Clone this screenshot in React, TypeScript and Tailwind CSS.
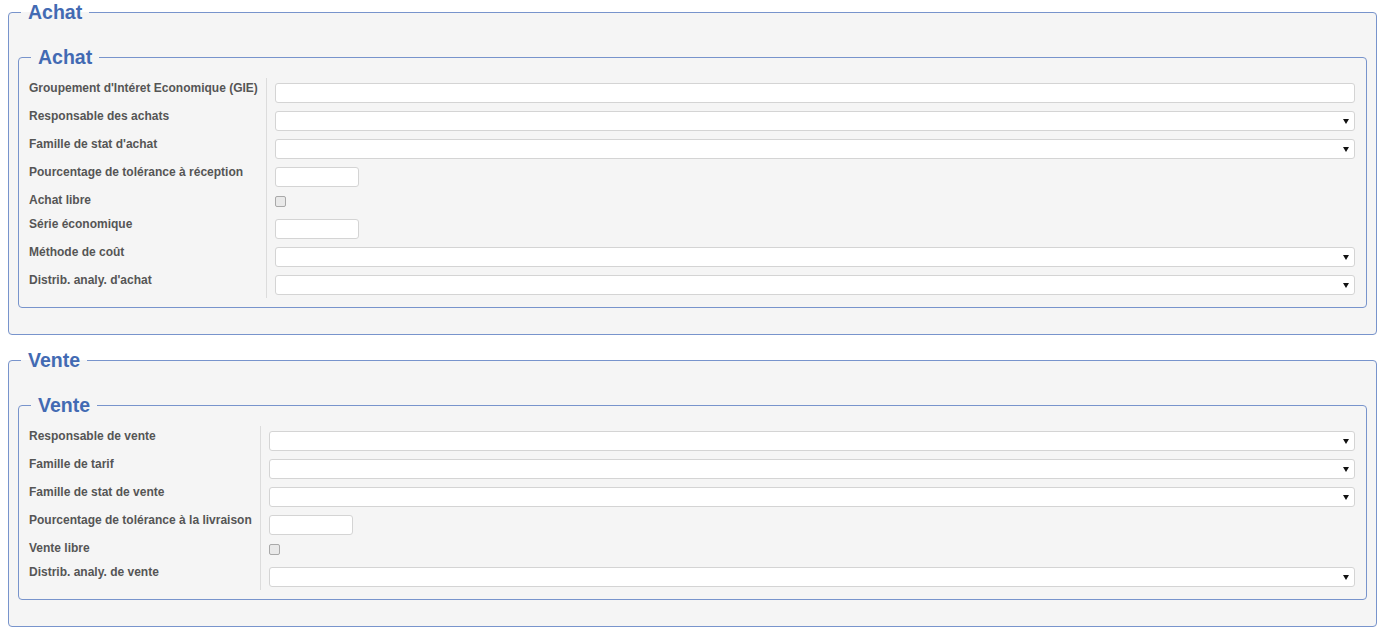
import React from "react";

type Field = {
  label: string;
  kind: "text" | "select" | "small" | "check";
};

const achatFields: Field[] = [
  { label: "Groupement d'Intéret Economique (GIE)", kind: "text" },
  { label: "Responsable des achats", kind: "select" },
  { label: "Famille de stat d'achat", kind: "select" },
  { label: "Pourcentage de tolérance à réception", kind: "small" },
  { label: "Achat libre", kind: "check" },
  { label: "Série économique", kind: "small" },
  { label: "Méthode de coût", kind: "select" },
  { label: "Distrib. analy. d'achat", kind: "select" },
];

const venteFields: Field[] = [
  { label: "Responsable de vente", kind: "select" },
  { label: "Famille de tarif", kind: "select" },
  { label: "Famille de stat de vente", kind: "select" },
  { label: "Pourcentage de tolérance à la livraison", kind: "small" },
  { label: "Vente libre", kind: "check" },
  { label: "Distrib. analy. de vente", kind: "select" },
];

function Control({ kind, last }: { kind: Field["kind"]; last: boolean }) {
  const pad = last ? "pb-[3px]" : "pb-[8px]";
  if (kind === "check") {
    return (
      <div className="pt-[1px] pb-[12px]">
        <span className="block h-[11px] w-[11px] rounded-[2px] border border-[#a9a9a9] bg-[#e9e9e9]" />
      </div>
    );
  }
  if (kind === "small") {
    return (
      <div className={pad}>
        <div className="h-[20px] w-[84px] rounded-[3px] border border-[#d4d4d4] bg-white" />
      </div>
    );
  }
  return (
    <div className={pad}>
      <div className="flex h-[20px] items-center justify-end rounded-[3px] border border-[#d4d4d4] bg-white pr-[5px]">
        {kind === "select" && (
          <svg width="6" height="5" viewBox="0 0 6 5">
            <polygon points="0,0 6,0 3,5" fill="#111" />
          </svg>
        )}
      </div>
    </div>
  );
}

function FieldRow({ field, labelWidth, last }: { field: Field; labelWidth: string; last: boolean }) {
  return (
    <div className="flex">
      <div className={`${labelWidth} shrink-0 border-r border-[#dcdcdc]`}>
        <div className="-mt-[3px] text-[12px] leading-[17px] font-bold text-[#555]">{field.label}</div>
      </div>
      <div className="flex-1 pl-2">
        <Control kind={field.kind} last={last} />
      </div>
    </div>
  );
}

function Section({ title, fields, labelWidth }: { title: string; fields: Field[]; labelWidth: string }) {
  return (
    <fieldset className="ml-2 mr-[6px] rounded-[4px] border border-[#7894cc] bg-[#f5f5f5] px-[9px] pb-[26px]">
      <legend className="ml-[3px] px-[7px] text-[19.5px] leading-[22px] font-bold text-[#426ab3]">{title}</legend>
      <fieldset className="mt-[23px] rounded-[4px] border border-[#7894cc] pr-[11px] pl-[10px] pb-[9px]">
        <legend className="ml-[2px] px-[7px] text-[19.5px] leading-[22px] font-bold text-[#426ab3]">{title}</legend>
        <div className="pt-[10px]">
          <div className="flex h-[5px]">
            <div className={`${labelWidth} shrink-0 border-r border-[#dcdcdc]`} />
          </div>
          {fields.map((f, i) => (
            <FieldRow key={i} field={f} labelWidth={labelWidth} last={i === fields.length - 1} />
          ))}
        </div>
      </fieldset>
    </fieldset>
  );
}

export default function App() {
  return (
    <div className="min-h-[640px] bg-white pt-px font-['Liberation_Sans',Arial,sans-serif]">
      <Section title="Achat" fields={achatFields} labelWidth="w-[238px]" />
      <div className="h-[14px]" />
      <Section title="Vente" fields={venteFields} labelWidth="w-[232px]" />
    </div>
  );
}
